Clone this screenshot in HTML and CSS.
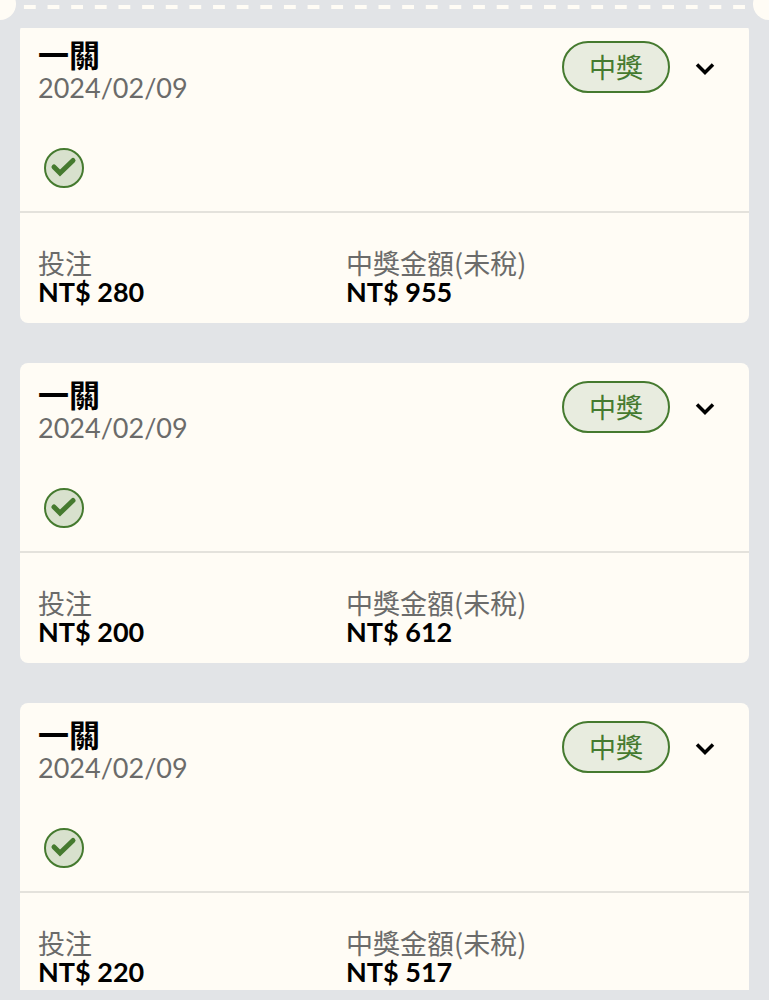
FILE: index.html
```html
<!DOCTYPE html>
<html lang="zh-Hant">
<head>
    <meta charset="UTF-8">
    <meta name="viewport" content="width=device-width, initial-scale=1.0">
    <title>投注紀錄</title>
    <link rel="stylesheet" href="styles.css">
</head>
<body>
    <div class="ticket-edge">
        <span class="notch notch-left"></span>
        <span class="dashes"></span>
        <span class="notch notch-right"></span>
    </div>

    <main class="bet-list">
        <article class="bet-card">
            <header class="bet-header">
                <div class="bet-name">
                    <h2>一關</h2>
                    <time datetime="2024-02-09">2024/02/09</time>
                </div>
                <span class="status">中獎</span>
                <button class="toggle" type="button" aria-label="展開">
                    <svg viewBox="0 0 20 14" width="20" height="14"><path d="M2 2.5 L10 10.5 L18 2.5"/></svg>
                </button>
            </header>
            <div class="bet-result">
                <svg class="check" viewBox="0 0 40 40" width="40" height="40">
                    <circle cx="20" cy="20" r="19"/>
                    <path d="M10 19 L16 25 L29 12.500"/>
                </svg>
            </div>
            <dl class="amounts">
                <div>
                    <dt>投注</dt>
                    <dd>NT$ 280</dd>
                </div>
                <div>
                    <dt>中獎金額(未稅)</dt>
                    <dd>NT$ 955</dd>
                </div>
            </dl>
        </article>

        <article class="bet-card">
            <header class="bet-header">
                <div class="bet-name">
                    <h2>一關</h2>
                    <time datetime="2024-02-09">2024/02/09</time>
                </div>
                <span class="status">中獎</span>
                <button class="toggle" type="button" aria-label="展開">
                    <svg viewBox="0 0 20 14" width="20" height="14"><path d="M2 2.5 L10 10.5 L18 2.5"/></svg>
                </button>
            </header>
            <div class="bet-result">
                <svg class="check" viewBox="0 0 40 40" width="40" height="40">
                    <circle cx="20" cy="20" r="19"/>
                    <path d="M10 19 L16 25 L29 12.500"/>
                </svg>
            </div>
            <dl class="amounts">
                <div>
                    <dt>投注</dt>
                    <dd>NT$ 200</dd>
                </div>
                <div>
                    <dt>中獎金額(未稅)</dt>
                    <dd>NT$ 612</dd>
                </div>
            </dl>
        </article>

        <article class="bet-card">
            <header class="bet-header">
                <div class="bet-name">
                    <h2>一關</h2>
                    <time datetime="2024-02-09">2024/02/09</time>
                </div>
                <span class="status">中獎</span>
                <button class="toggle" type="button" aria-label="展開">
                    <svg viewBox="0 0 20 14" width="20" height="14"><path d="M2 2.5 L10 10.5 L18 2.5"/></svg>
                </button>
            </header>
            <div class="bet-result">
                <svg class="check" viewBox="0 0 40 40" width="40" height="40">
                    <circle cx="20" cy="20" r="19"/>
                    <path d="M10 19 L16 25 L29 12.500"/>
                </svg>
            </div>
            <dl class="amounts">
                <div>
                    <dt>投注</dt>
                    <dd>NT$ 220</dd>
                </div>
                <div>
                    <dt>中獎金額(未稅)</dt>
                    <dd>NT$ 517</dd>
                </div>
            </dl>
        </article>
    </main>
</body>
</html>
```
FILE: styles.css
```css
* {
    box-sizing: border-box;
}

body {
    margin: 0;
    height: 100vh;
    padding-bottom: 10px;
    display: flex;
    flex-direction: column;
    overflow: hidden;
    background-color: #e2e4e7;
    color: #000;
    font-family: Lato, "Noto Sans CJK TC", sans-serif;
    font-size: 27px;
}

/* perforated line above the list */
.ticket-edge {
    display: flex;
    flex: none;
    height: 28px;
}

.notch {
    width: 16px;
    height: 32px;
    margin-top: -12px;
    background-color: #fffcf5;
}

.notch-left {
    border-radius: 0 16px 16px 0;
}

.notch-right {
    border-radius: 16px 0 0 16px;
}

.dashes {
    flex: 1;
    height: 4px;
    margin: 5px 2px 0;
    background-image: linear-gradient(90deg, transparent 25%, #fffcf5 25%, #fffcf5 75%, transparent 75%);
    background-size: 24px 4px;
    background-repeat: round;
}

/* the list scrolls, so cards are cut at its edges */
.bet-list {
    flex: 1;
    min-height: 0;
    margin: 0 20px;
    overflow-y: auto;
    scrollbar-width: none;
}

.bet-card {
    margin-bottom: 40px;
    border-radius: 8px;
    background-color: #fffcf5;
}

.bet-card:first-child {
    margin-top: -5px;
}

.bet-header {
    display: flex;
    align-items: flex-start;
    padding: 18px 24px 0 18px;
}

.bet-name {
    flex: 1;
}

.bet-name h2 {
    margin: 0;
    font-size: 31px;
    line-height: 28px;
}

.bet-name time {
    display: block;
    line-height: 38px;
    color: #6b6b6a;
}

.status {
    padding: 2px 25px 0;
    border: 2px solid #457a2f;
    border-radius: 26px;
    background-color: #e8ecdf;
    color: #457a2f;
    line-height: 46px;
}

.toggle {
    display: flex;
    align-items: center;
    justify-content: center;
    width: 40px;
    height: 56px;
    margin-left: 15px;
    padding: 0;
    border: none;
    background: none;
    cursor: pointer;
}

.toggle path {
    fill: none;
    stroke: #000;
    stroke-width: 3.5;
}

.bet-result {
    display: flex;
    padding: 41px 24px 23px;
    border-bottom: 2px solid #e4e2dc;
}

.check circle {
    fill: #d8e1cd;
    stroke: #457a2f;
    stroke-width: 2;
}

.check path {
    fill: none;
    stroke: #457a2f;
    stroke-width: 5;
    stroke-linecap: round;
}

.amounts {
    display: grid;
    grid-template-columns: 4fr 5fr;
    margin: 0;
    padding: 35px 18px 17px;
}

.amounts dt {
    font-family: "Noto Sans CJK TC", sans-serif;
    line-height: 30px;
    color: #6b6b6a;
}

.amounts dd {
    margin: 0;
    font-weight: bold;
    line-height: 28px;
}
```
